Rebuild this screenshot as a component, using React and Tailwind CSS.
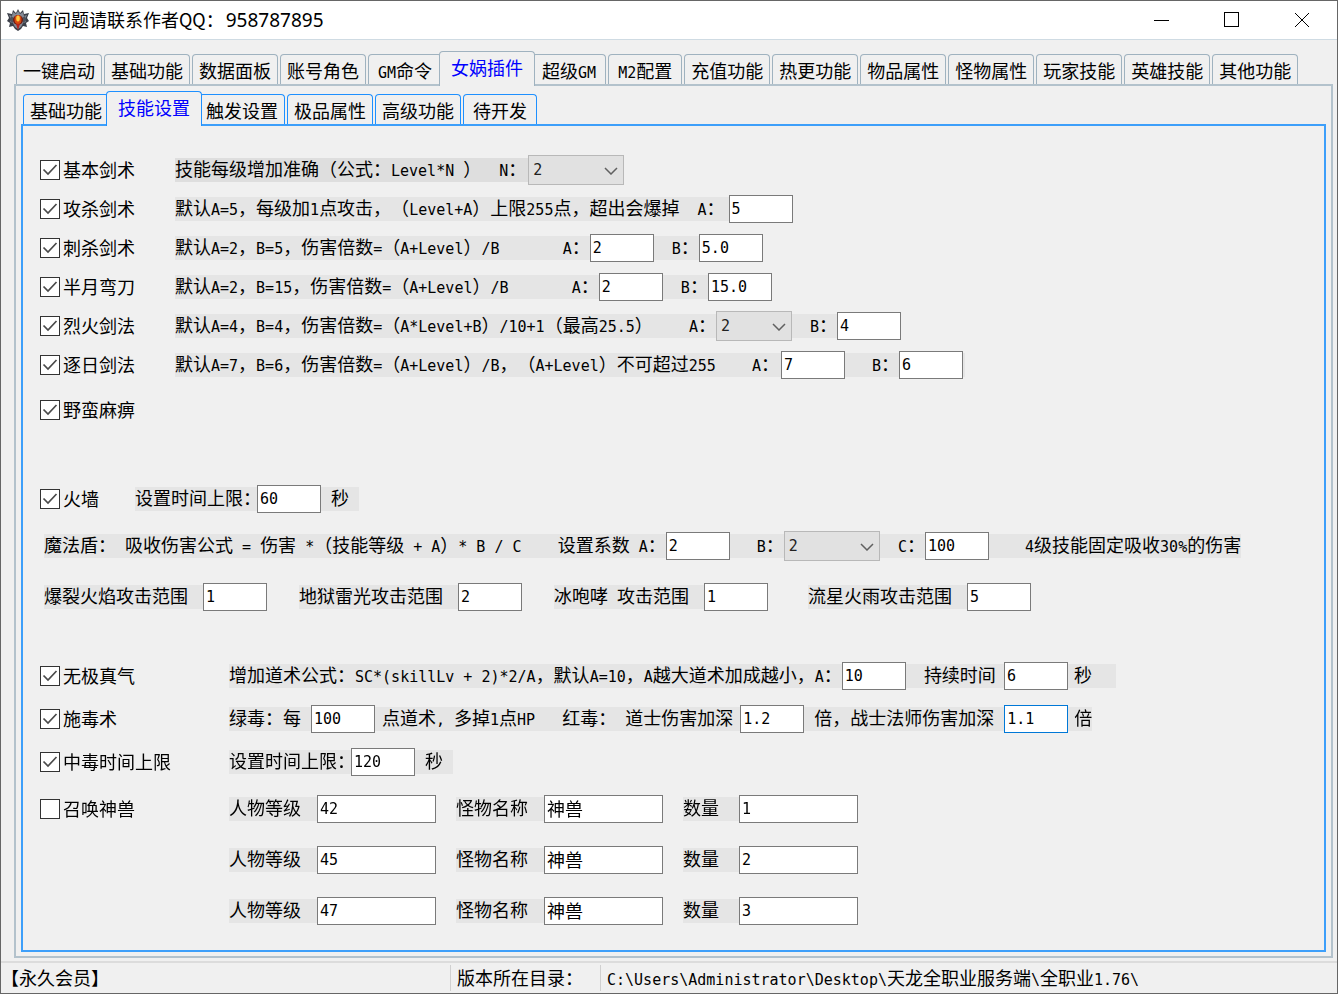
import React, { useState } from 'react';

const MAIN_TABS = [
    '一键启动', '基础功能', '数据面板', '账号角色', 'GM命令', '女娲插件', '超级GM', 'M2配置',
    '充值功能', '热更功能', '物品属性', '怪物属性', '玩家技能', '英雄技能', '其他功能',
];
const SUB_TABS = ['基础功能', '技能设置', '触发设置', '极品属性', '高级功能', '待开发'];

const SUMMONS = [
    { level: '42', monster: '神兽', count: '1' },
    { level: '45', monster: '神兽', count: '2' },
    { level: '47', monster: '神兽', count: '3' },
];

// Latin runs are set in a half-width mono face, so they take half a CJK cell each
function Mixed({ text }) {
    return text.split(/([\x20-\x7e]+)/).map((part, i) =>
        i % 2 ? (
            <span key={i} className="font-['DejaVu_Sans_Mono',monospace] text-[15px] leading-none">{part}</span>
        ) : (
            part
        )
    );
}

function Cap({ text, className = '' }) {
    return (
        <span className={`whitespace-pre shrink-0 pb-[3px] ${className}`}>
            <Mixed text={text} />
        </span>
    );
}

function Strip({ children, className = 'bg-[#e5e5e5]' }) {
    return <div className={`flex h-6 items-center shrink-0 ${className}`}>{children}</div>;
}

function Field({ label, value, wide, cjk, className = '', ...rest }) {
    return (
        <input
            type="text"
            aria-label={label}
            defaultValue={value}
            className={`h-7 shrink-0 border border-[#7a7a7a] bg-white pl-0.5 text-black outline-none focus:border-[#0078d7] ${
                wide ? 'w-[119px]' : 'w-16'
            } ${cjk ? 'pb-0.5 text-[18px]' : "font-['DejaVu_Sans_Mono',monospace] text-[15px]"} ${className}`}
            {...rest}
        />
    );
}

function Select({ label, value, className = 'w-24' }) {
    return (
        <div className={`relative h-[30px] shrink-0 ${className}`}>
            <select
                aria-label={label}
                defaultValue={value}
                className="h-full w-full appearance-none border border-[#b8b8b8] bg-[#e1e1e1] pl-1 font-['DejaVu_Sans_Mono',monospace] text-[15px] text-[#222] outline-none"
            >
                {['1', '2', '3', '4', '5'].map((n) => (
                    <option key={n}>{n}</option>
                ))}
            </select>
            <svg viewBox="0 0 14 8" className="pointer-events-none absolute right-1.5 top-3 h-2 w-3.5" fill="none" stroke="#606060" strokeWidth="1.5">
                <path d="M1 1l6 6 6-6" />
            </svg>
        </div>
    );
}

function Check({ text, checked = true }) {
    return (
        <label className="flex shrink-0 items-center gap-[3px]">
            <span className="relative h-5 w-5">
                <input type="checkbox" defaultChecked={checked} className="peer block h-5 w-5 appearance-none border border-[#333] bg-white" />
                <svg viewBox="0 0 20 20" className="pointer-events-none absolute inset-0 hidden h-5 w-5 peer-checked:block" fill="none" stroke="#4a4a4a" strokeWidth="1.7">
                    <path d="M3.5 9.5l4.5 4.5 8.5-9" />
                </svg>
            </span>
            <span className="pb-0.5">{text}</span>
        </label>
    );
}

// One line of the form: tick box in a fixed column, settings after it
function Row({ name, checked, col = 'w-[135px]', className = '', children }) {
    return (
        <div className={`flex h-[39px] items-center ${className}`}>
            <div className={`shrink-0 ${col}`}>{name && <Check text={name} checked={checked} />}</div>
            {children}
        </div>
    );
}

function Tabs({ items, active, onSelect, line, className }) {
    return (
        <div role="tablist" className={`flex h-[33px] items-end gap-0.5 ${className}`}>
            {items.map((name) => {
                const on = name === active;
                const short = name.length < 4 || /[A-Z]/.test(name);
                return (
                    <button
                        key={name}
                        type="button"
                        role="tab"
                        aria-selected={on}
                        onClick={() => onSelect(name)}
                        className={`shrink-0 rounded-t border border-b-0 bg-[#f0f0f0] whitespace-nowrap ${line} ${
                            on
                                ? 'relative z-10 -mx-[5px] -mb-0.5 h-[35px] px-[11px] pb-1 text-[#0000ff]'
                                : `h-[30px] ${short ? 'px-[9px]' : 'px-1.5'}`
                        }`}
                    >
                        <Mixed text={name} />
                    </button>
                );
            })}
        </div>
    );
}

function Emblem() {
    return (
        <svg viewBox="0 0 24 24" className="h-6 w-6">
            <path d="M12 1l2 4 3-3 1 4 5-1-2 5 2 3-3 2 1 4-4-1-2 3-3 2-3-2-2-3-4 1 1-4-3-2 2-3-2-5 5 1 1-4 3 3z" fill="#3b3f48" />
            <path d="M12 3l2 3 3-2 1 4 3-1-2 4 1 3-3 1-2 4-3 2-3-2-2-4-3-1 1-3-2-4 3 1 1-4 3 2z" fill="#858b96" />
            <path d="M5 8l3 2-1 5-3-2zM19 8l-3 2 1 5 3-2z" fill="#4d535e" />
            <circle cx="12" cy="12" r="5" fill="#6e1d12" />
            <ellipse cx="12" cy="11.500" rx="3.500" ry="4.500" fill="#d9480f" />
            <ellipse cx="12" cy="10.500" rx="1.800" ry="3" fill="#ffc93c" />
            <path d="M10 16h4l-2 6z" fill="#b3261e" />
        </svg>
    );
}

function TitleBar() {
    return (
        <header className="flex h-[39px] items-center border-t border-[#666] bg-white pl-[5px]">
            <Emblem />
            <h1 className="ml-[5px] flex-1 pb-0.5 whitespace-nowrap">
                有问题请联系作者QQ：<span className="ml-0.5 font-['Noto_Sans'] text-[19px]">958787895</span>
            </h1>
            <div className="flex h-full text-black">
                <button type="button" aria-label="最小化" className="flex w-[70px] items-center justify-center">
                    <svg className="h-4 w-4" viewBox="0 0 16 16" stroke="currentColor" fill="none"><path d="M0 8.500h15" /></svg>
                </button>
                <button type="button" aria-label="最大化" className="flex w-[70px] items-center justify-center">
                    <svg className="h-4 w-4" viewBox="0 0 16 16" stroke="currentColor" fill="none"><rect x="0.500" y="0.500" width="14" height="14" /></svg>
                </button>
                <button type="button" aria-label="关闭" className="flex w-[70px] items-center justify-center">
                    <svg className="h-4 w-4" viewBox="0 0 16 16" stroke="currentColor" fill="none"><path d="M1 1l14 14M15 1L1 15" /></svg>
                </button>
            </div>
        </header>
    );
}

function SkillSettings() {
    return (
        <div className="pt-6 pb-4 pl-[17px]">
            <Row name="基本剑术">
                <Strip className="bg-[#dedede]">
                    <Cap text="技能每级增加准确（公式：Level*N ）  N：" className="pr-0.5" />
                    <Select label="基本剑术 N" value="2" />
                </Strip>
            </Row>
            <Row name="攻杀剑术">
                <Strip>
                    <Cap text="默认A=5，每级加1点攻击，（Level+A）上限255点，超出会爆掉  A：" className="pr-1" />
                    <Field label="攻杀剑术 A" value="5" />
                </Strip>
            </Row>
            <Row name="刺杀剑术">
                <Strip>
                    <Cap text="默认A=2，B=5，伤害倍数=（A+Level）/B       A：" />
                    <Field label="刺杀剑术 A" value="2" />
                    <Cap text="  B：" />
                    <Field label="刺杀剑术 B" value="5.0" />
                </Strip>
            </Row>
            <Row name="半月弯刀">
                <Strip>
                    <Cap text="默认A=2，B=15，伤害倍数=（A+Level）/B       A：" />
                    <Field label="半月弯刀 A" value="2" />
                    <Cap text="  B：" />
                    <Field label="半月弯刀 B" value="15.0" />
                </Strip>
            </Row>
            <Row name="烈火剑法">
                <Strip>
                    <Cap text="默认A=4，B=4，伤害倍数=（A*Level+B）/10+1（最高25.5）    A：" />
                    <Select label="烈火剑法 A" value="2" className="w-[76px]" />
                    <Cap text="  B：" />
                    <Field label="烈火剑法 B" value="4" />
                </Strip>
            </Row>
            <Row name="逐日剑法">
                <Strip>
                    <Cap text="默认A=7，B=6，伤害倍数=（A+Level）/B，（A+Level）不可超过255    A：" className="pr-0.5" />
                    <Field label="逐日剑法 A" value="7" />
                    <Cap text="   B：" />
                    <Field label="逐日剑法 B" value="6" className="mr-0.5" />
                </Strip>
            </Row>
            <Row name="野蛮麻痹" className="mt-1.5" />

            <Row name="火墙" col="w-[95px]" className="mt-[50px]">
                <Strip>
                    <Cap text="设置时间上限：" className="-mr-1" />
                    <Field label="火墙时间上限" value="60" />
                    <Cap text="秒" className="px-2.5" />
                </Strip>
            </Row>
            <Row col="w-1" className="mt-2">
                <Strip>
                    <Cap text="魔法盾： 吸收伤害公式 = 伤害 *（技能等级 + A）* B / C    设置系数 A：" />
                    <Field label="魔法盾 A" value="2" />
                    <Cap text="   B：" />
                    <Select label="魔法盾 B" value="2" />
                    <Cap text="  C：" />
                    <Field label="魔法盾 C" value="100" />
                    <Cap text="    4级技能固定吸收30%的伤害" />
                </Strip>
            </Row>
            <Row col="w-1" className="mt-3">
                <div className="flex gap-8">
                    <Strip>
                        <Cap text="爆裂火焰攻击范围" className="pr-[15px]" />
                        <Field label="爆裂火焰攻击范围" value="1" />
                    </Strip>
                    <Strip>
                        <Cap text="地狱雷光攻击范围" className="pr-[15px]" />
                        <Field label="地狱雷光攻击范围" value="2" />
                    </Strip>
                    <Strip>
                        <Cap text="冰咆哮 攻击范围" className="pr-[15px]" />
                        <Field label="冰咆哮攻击范围" value="1" />
                    </Strip>
                    <Strip className="ml-2 bg-[#e5e5e5]">
                        <Cap text="流星火雨攻击范围" className="pr-[15px]" />
                        <Field label="流星火雨攻击范围" value="5" />
                    </Strip>
                </div>
            </Row>

            <Row name="无极真气" col="w-[189px]" className="mt-10">
                <Strip>
                    <Cap text="增加道术公式：SC*(skillLv + 2)*2/A，默认A=10，A越大道术加成越小，A：" />
                    <Field label="无极真气 A" value="10" />
                    <Cap text="  持续时间" className="pr-2" />
                    <Field label="持续时间" value="6" />
                    <Cap text="秒" className="pl-1.5 pr-6" />
                </Strip>
            </Row>
            <Row name="施毒术" col="w-[189px]" className="mt-1">
                <Strip>
                    <Cap text="绿毒：每" className="pr-2.5" />
                    <Field label="绿毒每点道术" value="100" />
                    <Cap text="点道术, 多掉1点HP   红毒： 道士伤害加深" className="px-[7px]" />
                    <Field label="道士伤害加深倍数" value="1.2" />
                    <Cap text="倍，战士法师伤害加深" className="px-2.5" />
                    <Field label="战士法师伤害加深倍数" value="1.1" autoFocus />
                    <Cap text="倍" className="pl-1.5" />
                </Strip>
            </Row>
            <Row name="中毒时间上限" col="w-[189px]" className="mt-1">
                <Strip>
                    <Cap text="设置时间上限：" className="-mr-1" />
                    <Field label="中毒时间上限" value="120" />
                    <Cap text="秒" className="px-2.5" />
                </Strip>
            </Row>
            {SUMMONS.map((s, i) => (
                <Row
                    key={s.level}
                    name={i === 0 ? '召唤神兽' : null}
                    checked={false}
                    col="w-[189px]"
                    className={i === 0 ? 'mt-2' : 'mt-3'}
                >
                    <div className="flex gap-5">
                        <Strip>
                            <Cap text="人物等级" className="pr-4" />
                            <Field label={`人物等级 ${i + 1}`} value={s.level} wide />
                        </Strip>
                        <Strip>
                            <Cap text="怪物名称" className="pr-4" />
                            <Field label={`怪物名称 ${i + 1}`} value={s.monster} wide cjk />
                        </Strip>
                        <Strip>
                            <Cap text="数量" className="pr-5" />
                            <Field label={`数量 ${i + 1}`} value={s.count} wide />
                        </Strip>
                    </div>
                </Row>
            ))}
        </div>
    );
}

export default function App() {
    const [tab, setTab] = useState('女娲插件');
    const [sub, setSub] = useState('技能设置');

    return (
        <div className="flex min-h-screen flex-col border-x border-b border-[#666] bg-[#f0f0f0] font-['Noto_Sans_CJK_SC',sans-serif] text-[18px] leading-6 text-black [text-spacing-trim:space-all]">
            <TitleBar />
            <main className="flex flex-1 flex-col border-t border-[#cfdbe3] px-1 pt-[11px] pb-[3px] pl-[13px]">
                <Tabs items={MAIN_TABS} active={tab} onSelect={setTab} line="border-[#9fb2bf]" className="pl-0.5" />
                <section className="flex flex-1 flex-col border-2 border-[#b3c2cc] px-[5px] pt-[5px] pb-1">
                    <Tabs items={SUB_TABS} active={sub} onSelect={setSub} line="border-[#1e90ff]" className="pl-0.5" />
                    <div className="flex-1 border-2 border-[#3d9ffa]">
                        <SkillSettings />
                    </div>
                </section>
            </main>
            <footer className="flex h-8 border-t-2 border-[#dcdcdc] whitespace-nowrap">
                <div className="my-0.5 flex w-[450px] items-center border-r border-[#d0d0d0]">
                    <Cap text="【永久会员】" />
                </div>
                <div className="my-0.5 flex w-[150px] items-center border-r border-[#d0d0d0] pl-1.5">
                    <Cap text="版本所在目录：" />
                </div>
                <div className="my-0.5 flex flex-1 items-center pl-1.5">
                    <Cap text="C:\Users\Administrator\Desktop\天龙全职业服务端\全职业1.76\" />
                </div>
            </footer>
        </div>
    );
}
